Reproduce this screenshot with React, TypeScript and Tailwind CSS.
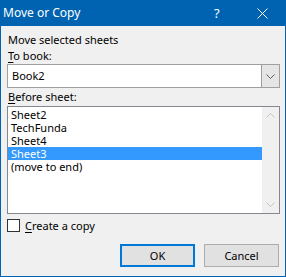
import React from "react";

const sheets = ["Sheet2", "TechFunda", "Sheet4", "Sheet3", "(move to end)"];

function Chevron({ up, color }: { up?: boolean; color: string }) {
  return (
    <svg width="9" height="5" viewBox="0 0 9 5" className="block">
      <path
        d={up ? "M0.5 4.5 L4.5 0.5 L8.5 4.5" : "M0.5 0.5 L4.5 4.5 L8.5 0.5"}
        fill="none"
        stroke={color}
        strokeWidth="1"
      />
    </svg>
  );
}

export default function App() {
  const selected = 3;

  return (
    <div
      className="w-[286px] h-[277px] flex flex-col bg-[#f0f0f0] border-x border-b border-[#0063b1] text-[11px] text-black"
      style={{ fontFamily: '"Segoe UI", "Noto Sans", sans-serif' }}
    >
      {/* title bar */}
      <div className="h-[26px] -mx-px flex items-center bg-[#0063b1] text-white">
        <span className="ml-[3px] flex-1 text-[12px] leading-[16px]">Move or Copy</span>
        <span className="w-[8px] text-[13px] leading-[16px]">?</span>
        <svg width="11" height="11" viewBox="0 0 11 11" className="ml-[35px] mr-[18px]">
          <path d="M0.5 0.5 L10.5 10.5 M10.5 0.5 L0.5 10.5" stroke="white" strokeWidth="1" />
        </svg>
      </div>

      <div className="flex flex-col pl-[6px] pr-[5px]">
        <div className="mt-[6px] pl-px leading-[16px]">Move selected sheets</div>
        <div className="pl-px leading-[16px]">
          <span className="underline underline-offset-2">T</span>o book:
        </div>

        {/* combo box */}
        <div className="h-[24px] flex border border-[#a0a0a0] bg-white">
          <div className="flex-1 pl-[4px] leading-[22px]">Book2</div>
          <div className="w-[18px] flex items-center justify-center bg-[#e5e5e5] border-l border-[#a0a0a0]">
            <Chevron color="#606060" />
          </div>
        </div>

        <div className="mt-px pl-px leading-[16px]">
          <span className="underline underline-offset-2">B</span>efore sheet:
        </div>

        {/* list box */}
        <div className="mt-px h-[108px] flex border border-[#828790] bg-white">
          <div className="flex-1 pt-px">
            {sheets.map((s, i) => (
              <div
                key={s}
                className={`h-[13px] pl-[3px] leading-[13px] ${
                  i === selected ? "bg-[#3399ff] text-white" : ""
                }`}
              >
                {s}
              </div>
            ))}
          </div>
          <div className="w-[17px] flex flex-col justify-between bg-[#f0f0f0]">
            <div className="h-[17px] flex items-center justify-center">
              <Chevron up color="#c2c2c2" />
            </div>
            <div className="h-[17px] flex items-center justify-center">
              <Chevron color="#c2c2c2" />
            </div>
          </div>
        </div>

        {/* checkbox */}
        <div className="mt-[5px] h-[13px] flex items-center">
          <div className="w-[13px] h-[13px] border border-[#333333] bg-white" />
          <span className="ml-[5px] leading-[13px]">
            <span className="underline underline-offset-2">C</span>reate a copy
          </span>
        </div>

        {/* buttons */}
        <div className="mt-[12px] mr-px flex justify-end gap-[9px]">
          <button className="w-[75px] h-[23px] bg-[#e1e1e1] border-2 border-[#0078d7] leading-[19px]">
            OK
          </button>
          <button className="w-[75px] h-[23px] bg-[#e1e1e1] border border-[#adadad] leading-[21px]">
            Cancel
          </button>
        </div>
      </div>
    </div>
  );
}
